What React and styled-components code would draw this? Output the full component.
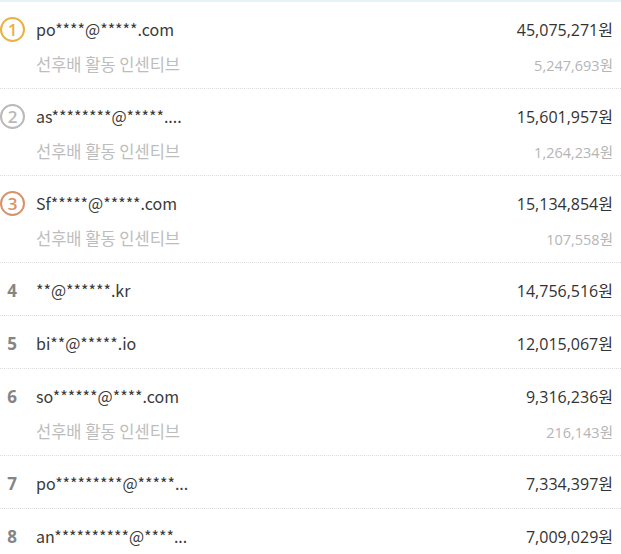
import React from 'react';
import styled, { createGlobalStyle } from 'styled-components';

const GlobalStyle = createGlobalStyle`
	html, body {
		margin: 0;
		padding: 0;
		background: #fff;
	}
	body {
		font-family: 'Open Sans', 'Noto Sans CJK KR', sans-serif;
	}
`;

const ranking = [
	{ rank: 1, name: 'po****@*****.com', amount: '45,075,271원', bonus: '5,247,693원' },
	{ rank: 2, name: 'as********@*****....', amount: '15,601,957원', bonus: '1,264,234원' },
	{ rank: 3, name: 'Sf*****@*****.com', amount: '15,134,854원', bonus: '107,558원' },
	{ rank: 4, name: '**@******.kr', amount: '14,756,516원' },
	{ rank: 5, name: 'bi**@*****.io', amount: '12,015,067원' },
	{ rank: 6, name: 'so******@****.com', amount: '9,316,236원', bonus: '216,143원' },
	{ rank: 7, name: 'po*********@*****...', amount: '7,334,397원' },
	{ rank: 8, name: 'an**********@****...', amount: '7,009,029원' },
];

const medalColors = {
	1: '#e9b13f',
	2: '#b9b9b9',
	3: '#d99169',
};

function App() {
	return (
		<>
			<GlobalStyle />
			<List>
				{ranking.map((item) => (
					<Row key={item.rank}>
						<Line>
							{medalColors[item.rank] ? (
								<Medal color={medalColors[item.rank]}>{item.rank}</Medal>
							) : (
								<Rank>{item.rank}</Rank>
							)}
							<Name>{item.name}</Name>
							<Amount>{item.amount}</Amount>
						</Line>
						{item.bonus && (
							<SubLine>
								<SubLabel>선후배 활동 인센티브</SubLabel>
								<SubAmount>{item.bonus}</SubAmount>
							</SubLine>
						)}
					</Row>
				))}
			</List>
		</>
	);
}

const List = styled.div`
	width: 621px;
	border-top: 2px solid #e3f3f6;
	box-sizing: border-box;
`;

const Row = styled.div`
	padding: 15px 8px 13px 0;
	border-bottom: 1px dotted #dcdcdc;
	display: flex;
	flex-direction: column;
	gap: 12px;
	&:last-child {
		border-bottom: none;
	}
`;

const Line = styled.div`
	display: flex;
	align-items: center;
	height: 24px;
`;

const Medal = styled.div`
	flex: 0 0 25px;
	width: 25px;
	height: 25px;
	box-sizing: border-box;
	border: 2px solid ${(p) => p.color};
	border-radius: 50%;
	color: ${(p) => p.color};
	font-size: 17px;
	font-weight: 600;
	line-height: 1;
	display: flex;
	align-items: center;
	justify-content: center;
	margin-right: 11px;
`;

const Rank = styled.div`
	flex: 0 0 24px;
	margin-right: 12px;
	text-align: center;
	font-size: 17px;
	font-weight: 700;
	color: #858585;
`;

const Name = styled.div`
	flex: 1;
	font-family: 'Noto Sans CJK KR', 'Open Sans', sans-serif;
	font-size: 16px;
	color: #3a3a3a;
`;

const Amount = styled.div`
	font-size: 16px;
	color: #333;
`;

const SubLine = styled.div`
	display: flex;
	align-items: center;
	height: 22px;
	padding-left: 36px;
`;

const SubLabel = styled.div`
	flex: 1;
	font-family: 'Noto Sans CJK KR', sans-serif;
	font-size: 16.5px;
	color: #bdbdbd;
`;

const SubAmount = styled.div`
	font-size: 14.5px;
	color: #b5b5b5;
`;

export default App;
